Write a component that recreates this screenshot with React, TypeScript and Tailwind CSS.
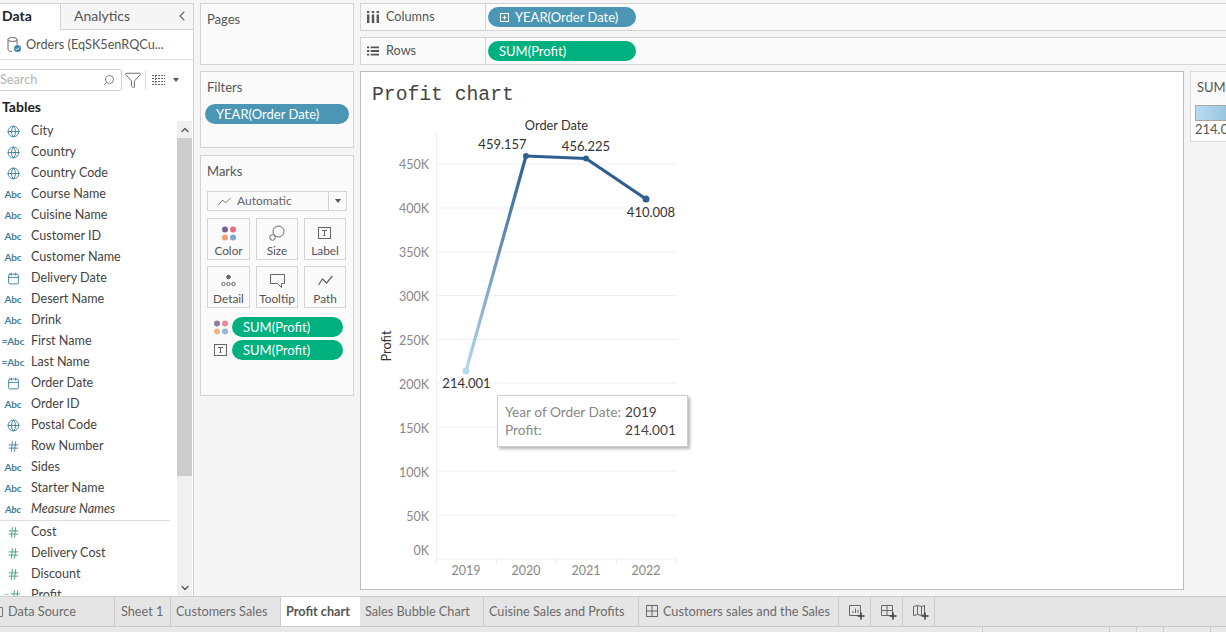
import React from "react";
import { Globe, Calendar, Hash, ChevronLeft, ChevronUp, ChevronDown, Search, Filter } from "lucide-react";

type Kind = "globe" | "abc" | "eq" | "cal" | "hash" | "mhash" | "calc";
const fields: { n: string; k: Kind; i?: boolean }[] = [
  { n: "City", k: "globe" }, { n: "Country", k: "globe" }, { n: "Country Code", k: "globe" },
  { n: "Course Name", k: "abc" }, { n: "Cuisine Name", k: "abc" }, { n: "Customer ID", k: "abc" },
  { n: "Customer Name", k: "abc" }, { n: "Delivery Date", k: "cal" }, { n: "Desert Name", k: "abc" },
  { n: "Drink", k: "abc" }, { n: "First Name", k: "eq" }, { n: "Last Name", k: "eq" },
  { n: "Order Date", k: "cal" }, { n: "Order ID", k: "abc" }, { n: "Postal Code", k: "globe" },
  { n: "Row Number", k: "hash" }, { n: "Sides", k: "abc" }, { n: "Starter Name", k: "abc" },
  { n: "Measure Names", k: "abc", i: true },
];
const measures: { n: string; k: Kind }[] = [
  { n: "Cost", k: "mhash" }, { n: "Delivery Cost", k: "mhash" }, { n: "Discount", k: "mhash" }, { n: "Profit", k: "calc" },
];

function FieldIcon({ k }: { k: Kind }) {
  const box = "w-[26px] flex justify-center items-center shrink-0";
  if (k === "globe") return <span className={box}><Globe size={13} strokeWidth={1.7} className="text-[#3f7f9f]" /></span>;
  if (k === "cal") return <span className={box}><Calendar size={13} strokeWidth={1.7} className="text-[#3f7f9f]" /></span>;
  if (k === "hash") return <span className={box}><Hash size={13} strokeWidth={1.7} className="text-[#3f7f9f]" /></span>;
  if (k === "mhash") return <span className={box}><Hash size={13} strokeWidth={1.7} className="text-[#3f9f80]" /></span>;
  if (k === "calc") return <span className={`${box} text-[#3f9f80] text-[10px]`}>=<Hash size={13} strokeWidth={1.7} /></span>;
  return (
    <span className={`${box} text-[10px] font-bold text-[#44809c] tracking-[-0.1px]`}>
      {k === "eq" ? "=Abc" : "Abc"}
    </span>
  );
}

function Pill({ children, color, w, pl }: { children: React.ReactNode; color: string; w: string; pl: string }) {
  return (
    <div className={`${color} ${w} ${pl} h-5 rounded-full flex items-center text-white text-[13px] leading-none shrink-0`}>
      {children}
    </div>
  );
}

function Dots({ faded }: { faded?: boolean }) {
  return (
    <svg width="16" height="15" viewBox="0 0 16 15" className={faded ? "opacity-80" : ""}>
      <circle cx="4" cy="3.5" r="3" fill="#76608f" />
      <circle cx="12" cy="3.5" r="3" fill="#ee6a7c" />
      <circle cx="4" cy="11.5" r="3" fill="#f2a070" />
      <circle cx="12" cy="11.5" r="3" fill="#7ea6cf" />
    </svg>
  );
}

function TIcon() {
  return (
    <svg width="14" height="12" viewBox="0 0 14 12" fill="none" stroke="#666">
      <rect x="0.5" y="0.5" width="12" height="11" />
      <path d="M4 3.5h5M6.5 3.5v5M5.5 8.5h2" />
    </svg>
  );
}

function MarkBtn({ label, icon }: { label: string; icon: React.ReactNode }) {
  return (
    <div className="h-[42px] border border-[#d4d4d4] bg-[#fafafa] flex flex-col items-center justify-between pt-[5px] pb-[1px] text-[11.8px] leading-[14px] text-[#555]">
      <span className="h-[18px] flex items-center">{icon}</span>
      <span>{label}</span>
    </div>
  );
}

function Card({ title, className, children }: { title: string; className: string; children?: React.ReactNode }) {
  return (
    <div className={`border border-[#d4d4d4] bg-[#fafafa] ${className}`}>
      <div className="pl-[6px] pt-[7px] text-[13px] leading-[16px] text-[#555]">{title}</div>
      {children}
    </div>
  );
}

function Shelf({ icon, label, children }: { icon: React.ReactNode; label: string; children: React.ReactNode }) {
  return (
    <div className="h-[28px] border border-[#d4d4d4] border-r-0 bg-[#fafafa] flex items-center">
      <div className="w-[125px] h-full border-r border-[#d4d4d4] flex items-center pl-[6px] gap-[7px] text-[12.7px] text-[#555] shrink-0">
        <span className="w-[12px] flex justify-center">{icon}</span>
        {label}
      </div>
      <div className="pl-[2px]">{children}</div>
    </div>
  );
}

function Tab({ w, children, active, pl = "pl-[5px]" }: { w: string; children: React.ReactNode; active?: boolean; pl?: string }) {
  return (
    <div
      className={`${w} ${pl} h-full shrink-0 border-r border-[#cccccc] flex items-center text-[12.7px] whitespace-nowrap ${
        active ? "bg-white font-bold text-[#555] border-r-0" : "text-[#6b6b6b] pt-px"
      }`}
    >
      {children}
    </div>
  );
}

function AddIcon({ kind }: { kind: "sheet" | "dash" | "story" }) {
  return (
    <svg width="17" height="17" viewBox="0 0 17 17" fill="none" stroke="#666">
      {kind === "sheet" && <path d="M1.5 1.5h11v10h-11zM5 9V7M7.5 9V4.5M10 9V6" />}
      {kind === "dash" && <path d="M1.5 1.5h11v10h-11zM7 1.5v10M1.5 6.5h11" />}
      {kind === "story" && <path d="M1.5 2.5l4-1 4 1 3-1v9l-3 1-4-1-4 1zM5.5 1.5v9M9.5 2.5v9" />}
      <path d="M13 8.5v7M9.5 12h7" stroke="#444" strokeWidth="1.6" />
    </svg>
  );
}

const yTicks: [string, number, number][] = [
  ["450K", 164, 169], ["400K", 208, 213], ["350K", 252, 257], ["300K", 295.5, 300.5], ["250K", 339.5, 344.5],
  ["200K", 383, 388.5], ["150K", 427, 432.5], ["100K", 471, 476.5], ["50K", 515, 520.5], ["0K", 559, 555],
];
const years = [["2019", 466], ["2020", 526], ["2021", 586], ["2022", 646]] as const;

function Chart() {
  return (
    <svg width="320" height="470" viewBox="370 110 320 470" className="block ml-[9px]">
      <defs>
        <linearGradient id="seg" gradientUnits="userSpaceOnUse" x1="466" y1="371" x2="526" y2="156">
          <stop offset="0" stopColor="#b4d8ec" />
          <stop offset="1" stopColor="#2f5f8f" />
        </linearGradient>
      </defs>
      <line x1="436.5" y1="134" x2="436.5" y2="559" stroke="#f0f0f0" />
      {yTicks.map(([t, y]) => (
        <line key={t} x1="436" x2="677" y1={y} y2={y} stroke="#efefef" />
      ))}
      {[436, 496, 556, 616, 676].map((x) => (
        <line key={x} x1={x + 0.5} x2={x + 0.5} y1="559" y2="563" stroke="#e8e8e8" />
      ))}
      {yTicks.map(([t, , ty]) => (
        <text key={t} x="429" y={ty} textAnchor="end" fontSize="12.5" fill="#888">{t}</text>
      ))}
      {years.map(([t, x]) => (
        <text key={t} x={x} y="575" textAnchor="middle" fontSize="12.5" fill="#888">{t}</text>
      ))}
      <text x="556.5" y="130" textAnchor="middle" fontSize="12.8" fill="#333">Order Date</text>
      <text transform="translate(391 346) rotate(-90)" textAnchor="middle" fontSize="12.8" fill="#333">Profit</text>
      <line x1="466" y1="371" x2="526" y2="156" stroke="url(#seg)" strokeWidth="3.2" strokeLinecap="round" />
      <path d="M526 156L586 158.5" stroke="#2f5f8f" strokeWidth="3.2" />
      <path d="M586 158.5L646 199" stroke="#2f5f8f" strokeWidth="3.2" />
      <circle cx="466" cy="371" r="3.5" fill="#b4d8ec" />
      <circle cx="526" cy="156" r="3" fill="#2f5f8f" />
      <circle cx="586" cy="158.5" r="3" fill="#2f5f8f" />
      <circle cx="646" cy="199" r="3.5" fill="#2f5f8f" />
      <text x="502.5" y="149" textAnchor="middle" fontSize="13" fill="#333">459.157</text>
      <text x="586" y="151" textAnchor="middle" fontSize="13" fill="#333">456.225</text>
      <text x="651" y="217" textAnchor="middle" fontSize="13" fill="#333">410.008</text>
      <text x="466.5" y="388" textAnchor="middle" fontSize="13" fill="#333">214.001</text>
    </svg>
  );
}

export default function App() {
  return (
    <div className="w-[1226px] h-[632px] overflow-hidden flex flex-col bg-[#f5f5f5] font-['Lato',sans-serif]">
      <div className="flex-1 min-h-0 flex pt-[3px]">
        {/* Data pane */}
        <div className="w-[194px] shrink-0 bg-white border-t border-r border-[#d4d4d4] flex flex-col overflow-hidden">
          <div className="h-[26px] flex shrink-0">
            <div className="w-[61px] pl-[2px] pb-[3px] flex items-center text-[14px] font-bold text-[#222] border-r border-[#d4d4d4]">Data</div>
            <div className="flex-1 bg-[#f5f5f5] border-b border-[#d4d4d4] flex items-center justify-between pb-[2px] pl-[13px] pr-[3px] text-[14px] text-[#555]">
              Analytics
              <ChevronLeft size={16} strokeWidth={1.6} className="text-[#666]" />
            </div>
          </div>
          <div className="h-[30px] shrink-0 border-b border-[#e2e2e2] flex items-center pl-[7px] gap-[4px] text-[12.7px] text-[#555]">
            <svg width="15" height="17" viewBox="0 0 15 17" fill="none">
              <ellipse cx="5.5" cy="3.5" rx="4.5" ry="2" stroke="#666" />
              <path d="M1 3.5v10c0 1 2 2 4 2M10 3.5v5" stroke="#666" />
              <circle cx="10.5" cy="12.5" r="3.5" fill="#3f86a8" />
              <path d="M8.8 12.5l1.3 1.3 2-2.2" stroke="#fff" />
            </svg>
            Orders (EqSK5enRQCu...
          </div>
          <div className="h-[22px] mt-[9px] shrink-0 flex items-center">
            <div className="w-[122px] h-[22px] border border-l-0 border-[#d0d0d0] rounded-r-[2px] flex items-center justify-between pr-[6px] text-[12.7px] text-[#b5b5b5]">
              Search
              <Search size={12} strokeWidth={1.6} className="text-[#666] -scale-x-100" />
            </div>
            <Filter size={18} strokeWidth={1.1} className="text-[#555] ml-[2px]" />
            <div className="w-px h-[18px] bg-[#d4d4d4] ml-[3px]" />
            <svg width="13" height="10" viewBox="0 0 13 10" className="ml-[6px]" stroke="#666">
              <path d="M0 .5h13M0 3.5h13M0 6.5h13M0 9.5h13M3.5 0v10" strokeDasharray="2 1" />
            </svg>
            <span className="ml-[8px] w-0 h-0 border-x-[3.5px] border-x-transparent border-t-[4px] border-t-[#555]" />
          </div>
          <div className="flex-1 min-h-0 flex mt-[5px]">
            <div className="flex-1 min-w-0 overflow-hidden">
              <div className="pl-[2px] text-[14px] leading-[22px] font-bold text-[#222] h-[24px]">Tables</div>
              <div className="pt-px">
                {fields.map((f) => (
                  <div key={f.n} className={`h-[21px] flex items-center text-[12.6px] text-[#444] whitespace-nowrap ${f.i ? "italic" : ""}`}>
                    <FieldIcon k={f.k} />
                    <span className="ml-[5px]">{f.n}</span>
                  </div>
                ))}
              </div>
              <div className="h-px bg-[#dcdcdc] mr-[7px] mb-[1px]" />
              {measures.map((f) => (
                <div key={f.n} className="h-[21px] flex items-center text-[12.6px] text-[#444] whitespace-nowrap">
                  <FieldIcon k={f.k} />
                  <span className="ml-[5px]">{f.n}</span>
                </div>
              ))}
            </div>
            <div className="w-[15px] mt-[25px] bg-[#f0f0f0] flex flex-col shrink-0 mr-px">
              <div className="h-[17px] flex items-center justify-center"><ChevronUp size={12} strokeWidth={2.5} className="text-[#555]" /></div>
              <div className="h-[338px] bg-[#cdcdcd]" />
              <div className="flex-1" />
              <div className="h-[17px] flex items-center justify-center"><ChevronDown size={12} strokeWidth={2.5} className="text-[#555]" /></div>
            </div>
          </div>
        </div>

        {/* Cards column */}
        <div className="w-[154px] ml-[6px] shrink-0 flex flex-col">
          <Card title="Pages" className="h-[62px]" />
          <Card title="Filters" className="h-[77px] mt-[6px]">
            <div className="mt-[9px] ml-[4px]">
              <Pill color="bg-[#4a96b4]" w="w-[144px]" pl="pl-[11px]">YEAR(Order Date)</Pill>
            </div>
          </Card>
          <Card title="Marks" className="h-[241px] mt-[7px]">
            <div className="mx-[6px] mt-[12px] h-[20px] border border-[#d4d4d4] flex items-center text-[12px] text-[#666]">
              <div className="flex-1 h-full flex items-center pl-[10px] gap-[6px] border-r border-[#d4d4d4]">
                <svg width="13" height="9" viewBox="0 0 13 9" fill="none" stroke="#777"><path d="M0.5 8l4-5 3 3 5-5" /></svg>
                Automatic
              </div>
              <div className="w-[17px] flex justify-center">
                <span className="w-0 h-0 border-x-[3.5px] border-x-transparent border-t-[4px] border-t-[#555]" />
              </div>
            </div>
            <div className="mx-[6px] mt-[7px] grid grid-cols-[43px_42px_42px] gap-x-[6px] gap-y-[6px]">
              <MarkBtn label="Color" icon={<Dots />} />
              <MarkBtn label="Size" icon={
                <svg width="16" height="16" viewBox="0 0 16 16" fill="none" stroke="#666"><circle cx="9.5" cy="6.5" r="5.5" /><circle cx="3.5" cy="12.5" r="2.8" fill="#fafafa" /></svg>
              } />
              <MarkBtn label="Label" icon={<TIcon />} />
              <MarkBtn label="Detail" icon={
                <svg width="15" height="14" viewBox="0 0 15 14" fill="none" stroke="#666"><circle cx="7.5" cy="3" r="1.8" fill="#666" /><circle cx="2.5" cy="10" r="1.7" /><circle cx="7.5" cy="10" r="1.7" /><circle cx="12.5" cy="10" r="1.7" /></svg>
              } />
              <MarkBtn label="Tooltip" icon={
                <svg width="15" height="14" viewBox="0 0 15 14" fill="none" stroke="#666"><path d="M0.5 0.5h14v9h-3v4l-4-4h-7z" /></svg>
              } />
              <MarkBtn label="Path" icon={
                <svg width="15" height="12" viewBox="0 0 15 12" fill="none" stroke="#666" strokeWidth="1.2"><path d="M0.5 10l4-6 4 4 6-7" /></svg>
              } />
            </div>
            <div className="mt-[9px] ml-[12px] flex items-center gap-[3px]">
              <Dots faded />
              <Pill color="bg-[#00b180]" w="w-[111px]" pl="pl-[11px]">SUM(Profit)</Pill>
            </div>
            <div className="mt-[3px] ml-[13px] flex items-center gap-[4px]">
              <TIcon />
              <Pill color="bg-[#00b180]" w="w-[111px]" pl="pl-[11px]">SUM(Profit)</Pill>
            </div>
          </Card>
        </div>

        {/* Right */}
        <div className="flex-1 min-w-0 ml-[6px] flex flex-col">
          <Shelf
            label="Columns"
            icon={<svg width="12" height="12" viewBox="0 0 12 12" fill="#555"><path d="M0 3.5h2.4V12H0zM4.8 3.5h2.4V12H4.8zM9.6 3.5H12V12H9.6zM0 0h2.4v2H0zM4.8 0h2.4v2H4.8zM9.6 0H12v2H9.6z" /></svg>}
          >
            <Pill color="bg-[#4a96b4]" w="w-[148px]" pl="pl-[12px] gap-[6px]">
              <svg width="9" height="9" viewBox="0 0 9 9" fill="none" stroke="#fff"><rect x="0.5" y="0.5" width="8" height="8" /><path d="M2.5 4.5h4M4.5 2.5v4" /></svg>
              YEAR(Order Date)
            </Pill>
          </Shelf>
          <div className="mt-[6px]">
            <Shelf
              label="Rows"
              icon={<svg width="13" height="10" viewBox="0 0 13 10" fill="#555"><path d="M0 0h2.4v2H0zM4 0h9v2H4zM0 4h2.4v2H0zM4 4h9v2H4zM0 8h2.4v2H0zM4 8h9v2H4z" /></svg>}
            >
              <Pill color="bg-[#00b180]" w="w-[148px]" pl="pl-[11px]">SUM(Profit)</Pill>
            </Shelf>
          </div>
          <div className="mt-[6px] flex items-start">
            <div className="relative w-[824px] h-[519px] shrink-0 bg-white border border-[#bdbdbd]">
              <div className="h-[38px] pl-[11px] pt-[10px] font-['Liberation_Mono',monospace] text-[19.7px] leading-[26px] text-[#444]">Profit chart</div>
              <Chart />
              <div className="absolute left-[136px] top-[323px] w-[191px] h-[52px] bg-white border border-[#cfcfcf] shadow-[2px_2px_3px_rgba(0,0,0,0.3)] pl-[7px] pt-[7px] text-[13.7px] leading-[18px]">
                <div className="flex"><span className="w-[120px] text-[#888] whitespace-nowrap">Year of Order Date:</span><span className="text-[#444]">2019</span></div>
                <div className="flex"><span className="w-[120px] text-[#888]">Profit:</span><span className="text-[#444]">214.001</span></div>
              </div>
            </div>
            <div className="ml-[6px] w-[36px] h-[71px] overflow-hidden border border-r-0 border-[#dcdcdc] bg-white">
              <div className="h-[32px] bg-[#fafafa] pl-[6px] pt-[7px] text-[13px] leading-[16px] text-[#555] whitespace-nowrap">SUM(Profit)</div>
              <div className="ml-[4px] mt-[1px] w-[40px] h-[16px] border border-[#a8a8a0] bg-gradient-to-r from-[#b8dcf0] to-[#8fc0de]" />
              <div className="pl-[4px] text-[13px] leading-[16px] text-[#555] whitespace-nowrap">214.001</div>
            </div>
          </div>
        </div>
      </div>

      {/* Sheet tabs */}
      <div className="h-[31px] shrink-0 border-y border-[#cccccc] bg-[#e5e5e5] flex items-center">
        <div className="w-[115px] h-full shrink-0 border-r border-[#cccccc] flex items-center text-[12.7px] text-[#6b6b6b] pt-px">
          <svg width="3" height="12" viewBox="0 0 3 12" fill="none" stroke="#777" className="mr-[5px]"><path d="M0 1.5h2.5v9H0" /></svg>
          Data Source
        </div>
        <Tab w="w-[56px]" pl="pl-[6px]">Sheet 1</Tab>
        <Tab w="w-[110px]">Customers Sales</Tab>
        <Tab w="w-[79px]" active>Profit chart</Tab>
        <Tab w="w-[124px]">Sales Bubble Chart</Tab>
        <Tab w="w-[155px]">Cuisine Sales and Profits</Tab>
        <Tab w="w-[200px]">
          <svg width="12" height="12" viewBox="0 0 12 12" fill="none" stroke="#666" className="ml-[2px] mr-[5px] mb-[2px]"><path d="M.5.5h11v11H.5zM6 .5v11M.5 6h11" /></svg>
          Customers sales and the Sales
        </Tab>
        <Tab w="w-[32px]" pl="pl-[9px]"><AddIcon kind="sheet" /></Tab>
        <Tab w="w-[32px]" pl="pl-[9px]"><AddIcon kind="dash" /></Tab>
        <Tab w="w-[32px]" pl="pl-[9px]"><AddIcon kind="story" /></Tab>
      </div>
      <div className="h-[5px] shrink-0 bg-[#e8e8e8] flex">
        <div className="w-[983px] border-r border-[#cccccc]" />
        <div className="w-[127px] border-r border-[#cccccc]" />
        <div className="w-[27px] border-r border-[#cccccc]" />
        <div className="w-[27px] border-r border-[#cccccc]" />
        <div className="w-[47px] border-r border-[#cccccc]" />
      </div>
    </div>
  );
}
